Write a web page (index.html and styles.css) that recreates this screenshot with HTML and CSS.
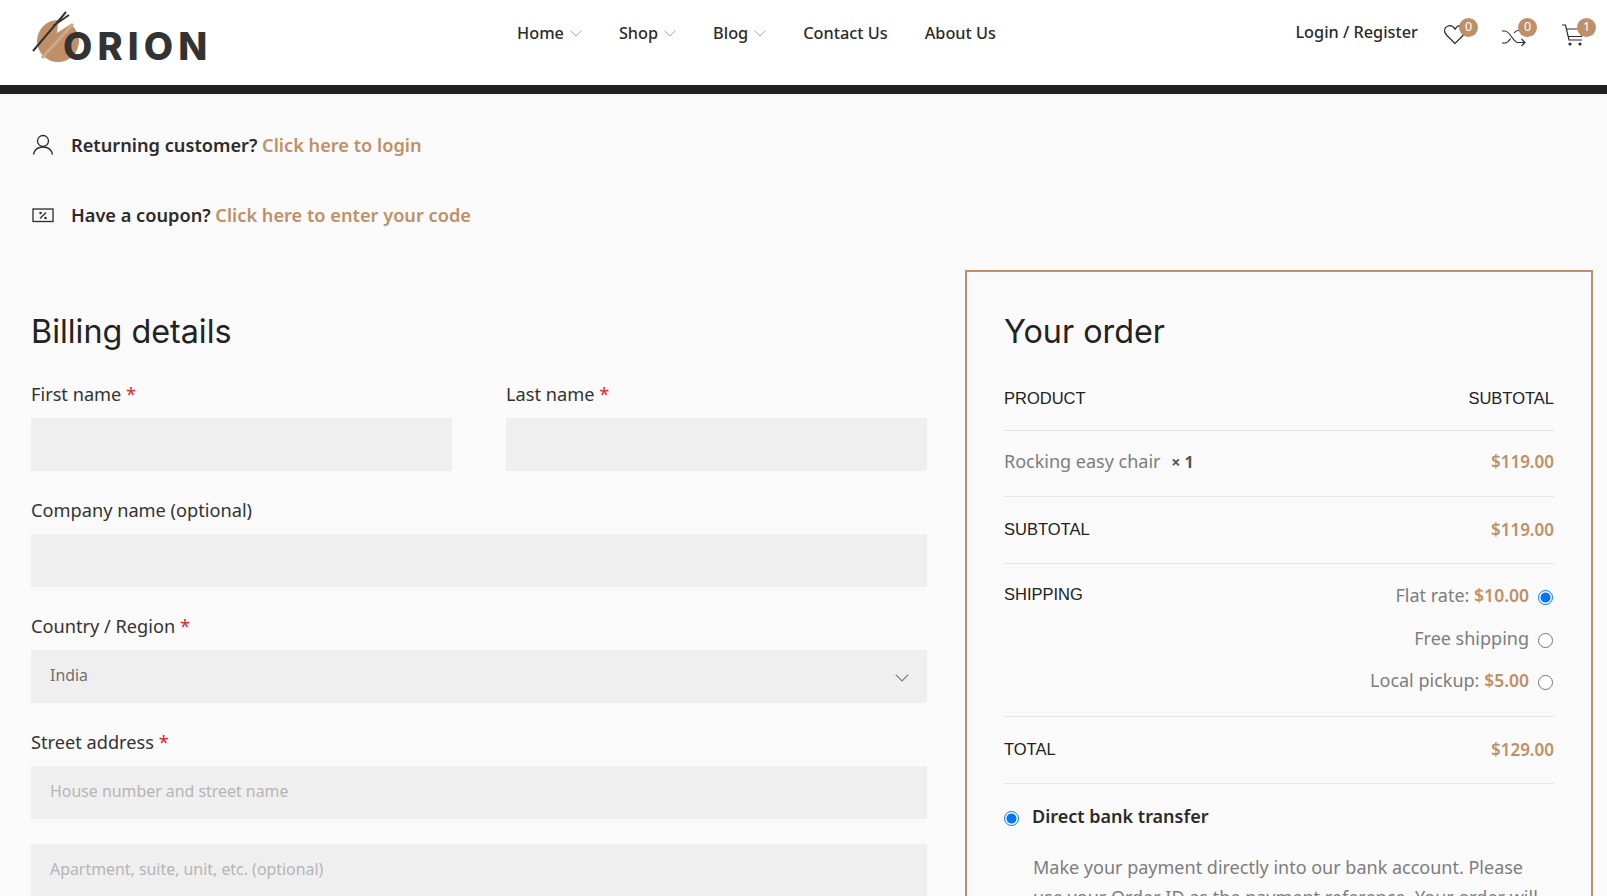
FILE: index.html
```html
<!DOCTYPE html>
<html lang="en">
<head>
<meta charset="utf-8">
<title>Checkout</title>
<link rel="stylesheet" href="styles.css">
</head>
<body>
<header class="site-header">
  <a class="logo">
    <svg class="logo-mark" width="56" height="60" viewBox="32 8 56 60">
      <circle cx="58" cy="41" r="21" fill="#bf9068"/>
      <path d="M57 33 59 15 80 15 74 22Z" fill="#fff"/>
      <path d="M42 58 73 24" stroke="#cfa888" stroke-width="3" fill="none"/>
      <path d="M33 51 66 12M53 26 69 15" stroke="#333" stroke-width="2" fill="none"/>
    </svg>
    <span class="logo-text">ORION</span>
  </a>
  <nav class="main-nav">
    <a class="nav-link">Home<svg class="chev" viewBox="0 0 12 7"><path d="M.5.5 6 6l5.500-5.500"/></svg></a>
    <a class="nav-link">Shop<svg class="chev" viewBox="0 0 12 7"><path d="M.5.5 6 6l5.500-5.500"/></svg></a>
    <a class="nav-link">Blog<svg class="chev" viewBox="0 0 12 7"><path d="M.5.5 6 6l5.500-5.500"/></svg></a>
    <a class="nav-link">Contact Us</a>
    <a class="nav-link">About Us</a>
  </nav>
  <div class="header-tools">
    <a class="login">Login / Register</a>
    <a class="tool">
      <svg width="24" height="24" viewBox="0 0 24 24" class="tool-icon"><path d="M12 21.500 3.500 13C.5 10 1 5.500 4.500 4.200c3-1.100 5.800 0 7.500 3 1.700-3 4.500-4.100 7.500-3C23 5.500 23.500 10 20.500 13Z"/></svg>
      <span class="badge">0</span>
    </a>
    <a class="tool">
      <svg width="24" height="24" viewBox="0 0 24 24" class="tool-icon"><path d="M0 9h3c5 0 8 11.500 13 11.500h7M0 21h3c2.500 0 4-2 5.500-4.500M12 11c1.200-1.500 2.500-2.500 4-2.500h7M19.500 17l3.500 3.500-3.500 3.500"/></svg>
      <span class="badge">0</span>
    </a>
    <a class="tool">
      <svg width="24" height="24" viewBox="0 0 24 24" class="tool-icon"><path d="M1 3h3.500l3.500 15h13M5.500 7H23l-2.500 7.500H7.500"/><circle class="dot" cx="9" cy="22" r="1.600"/><circle class="dot" cx="19" cy="22" r="1.600"/></svg>
      <span class="badge">1</span>
    </a>
  </div>
</header>

<main class="page">
  <div class="notices">
    <p class="notice">
      <svg width="24" height="24" viewBox="0 0 24 24" class="notice-icon"><circle cx="12" cy="8" r="5.500"/><path d="M2.500 21.500C3.500 16.500 7 14 12 14s8.500 2.500 9.500 7.500"/></svg>
      <span>Returning customer? <a class="accent">Click here to login</a></span>
    </p>
    <p class="notice">
      <svg width="24" height="24" viewBox="0 0 24 24" class="notice-icon"><rect x="2" y="6" width="20" height="12.500"/><path d="M9 15.500l6-6"/><circle cx="9.500" cy="10" r=".6"/><circle cx="14.500" cy="15" r=".6"/></svg>
      <span>Have a coupon? <a class="accent">Click here to enter your code</a></span>
    </p>
  </div>

  <div class="checkout">
    <section class="billing">
      <h2 class="section-title">Billing details</h2>
      <div class="field-row">
        <div class="field">
          <label class="field-label">First name <em class="req">*</em></label>
          <div class="input"></div>
        </div>
        <div class="field">
          <label class="field-label">Last name <em class="req">*</em></label>
          <div class="input"></div>
        </div>
      </div>
      <div class="field">
        <label class="field-label">Company name (optional)</label>
        <div class="input"></div>
      </div>
      <div class="field">
        <label class="field-label">Country / Region <em class="req">*</em></label>
        <div class="input select">
          <span>India</span>
          <svg class="select-chev" viewBox="0 0 12 7"><path d="M.5.500 6 6l5.500-5.500"/></svg>
        </div>
      </div>
      <div class="field field-tight">
        <label class="field-label">Street address <em class="req">*</em></label>
        <div class="input placeholder">House number and street name</div>
      </div>
      <div class="field">
        <div class="input placeholder">Apartment, suite, unit, etc. (optional)</div>
      </div>
    </section>

    <aside class="order">
      <h2 class="section-title">Your order</h2>
      <div class="order-row row-head">
        <span class="row-name">PRODUCT</span>
        <span class="row-name">SUBTOTAL</span>
      </div>
      <div class="order-row row-item">
        <span class="muted">Rocking easy chair <strong class="qty">× 1</strong></span>
        <span class="price">$119.00</span>
      </div>
      <div class="order-row row-sub">
        <span class="row-name">SUBTOTAL</span>
        <span class="price">$119.00</span>
      </div>
      <div class="order-row row-ship">
        <span class="row-name ship-name">SHIPPING</span>
        <ul class="ship-list">
          <li class="ship-option"><span class="muted">Flat rate: <b class="price">$10.00</b></span><span class="radio on"></span></li>
          <li class="ship-option"><span class="muted">Free shipping</span><span class="radio"></span></li>
          <li class="ship-option"><span class="muted">Local pickup: <b class="price">$5.00</b></span><span class="radio"></span></li>
        </ul>
      </div>
      <div class="order-row row-total">
        <span class="row-name">TOTAL</span>
        <span class="price">$129.00</span>
      </div>
      <div class="payment">
        <span class="radio on"></span>
        <strong class="pay-name">Direct bank transfer</strong>
      </div>
      <p class="pay-note">Make your payment directly into our bank account. Please use your Order ID as the payment reference. Your order will not be shipped until the funds have cleared.</p>
    </aside>
  </div>
</main>
</body>
</html>
```
FILE: styles.css
```css
* { box-sizing: border-box; }
html, body { margin: 0; height: 896px; overflow: hidden; }
body { background: #fafafa; color: #2b2b2b; font-family: "Noto Sans", "Open Sans", sans-serif; font-size: 18px; }
a { color: inherit; text-decoration: none; }
p, h2, ul { margin: 0; padding: 0; }
em { font-style: normal; }

.site-header { height: 94px; background: #fff; border-bottom: 9px solid #212121; display: flex; padding: 0 12px 0 32px; align-items: flex-start; }
.logo { position: relative; display: block; height: 85px; width: 190px; flex: none; }
.logo-mark { position: absolute; left: 0; top: 8px; }
.logo-text { position: absolute; left: 31px; top: 23px; font-family: "Inter", sans-serif; font-weight: 800; font-size: 38px; line-height: 46px; letter-spacing: 5.100px; color: #333; }
.main-nav { display: flex; gap: 37px; padding-top: 21px; margin-left: 295px; }
.nav-link { display: flex; align-items: center; gap: 6px; font-size: 16.300px; font-weight: 500; line-height: 24px; color: #2b2b2b; }
.chev { width: 12px; height: 7px; fill: none; stroke: #aaa; stroke-width: 1; margin-top: 1px; }
.header-tools { display: flex; align-items: flex-start; padding-top: 20px; margin-left: auto; }
.login { font-size: 16.300px; font-weight: 500; line-height: 24px; margin-right: 25px; }
.tool { position: relative; display: block; width: 59px; height: 30px; padding-top: 2px; }
.tool:last-child { width: 34px; }
.tool-icon { fill: none; stroke: #2b2b2b; stroke-width: 1.200; overflow: visible; }
.tool-icon .dot { fill: #2b2b2b; stroke: none; }
.badge { position: absolute; left: 16px; top: -2px; width: 19px; height: 19px; border-radius: 50%; background: #bf9068; color: #fff; font-size: 12.500px; line-height: 17px; text-align: center; }

.notices { padding: 31px 31px 5px; }
.notice { display: flex; align-items: center; gap: 16px; height: 40px; margin-bottom: 30px; font-size: 18.200px; font-weight: 600; color: #2b2b2b; }
.notice-icon { fill: none; stroke: #2b2b2b; stroke-width: 1.300; flex: none; }
.accent { color: #bf9068; }

.checkout { display: grid; grid-template-columns: 896px 628px; gap: 38px; padding: 0 14px 0 31px; }
.section-title { font-family: "Inter", "Noto Sans", sans-serif; font-weight: 400; font-size: 32.300px; line-height: 40px; color: #222; }
.billing { padding-top: 42px; }
.field-row { display: grid; grid-template-columns: 421px 421px; gap: 54px; }
.field { margin-bottom: 26px; }
.field-tight { margin-bottom: 25px; }
.field-label { display: block; font-size: 18.200px; line-height: 26px; margin-bottom: 11px; color: #333; }
.req { color: #d9262c; }
.billing .section-title { margin-bottom: 29px; }
.input { height: 53px; background: #efefef; padding: 0 19px 4px; display: flex; align-items: center; font-size: 15.900px; color: #6f6f6f; }
.select { justify-content: space-between; }
.select-chev { width: 14px; height: 8px; fill: none; stroke: #777; stroke-width: 1; margin: 7px -1px 0 0; }
.placeholder { color: #b5b5b5; }

.order { border: 2px solid #bf9068; height: 800px; padding: 40px 37px 0; }
.order .section-title { margin-bottom: 19px; }
.order-row { display: flex; justify-content: space-between; align-items: center; border-bottom: 1px solid #e4e4e4; }
.row-head { height: 60px; padding-bottom: 5px; }
.row-item { height: 66px; padding-bottom: 5px; }
.row-sub { height: 67px; padding-bottom: 2px; }
.row-ship { height: 153px; align-items: flex-start; padding-top: 18px; }
.ship-name { margin-top: 3px; }
.row-total { height: 67px; padding-bottom: 2px; }
.row-name { font-family: "Liberation Sans", sans-serif; font-size: 16.500px; color: #222; }
.muted { color: #7d7d7d; font-size: 18px; font-weight: 400; }
.qty { color: #555; font-weight: 700; margin-left: 6px; font-size: 16px; }
.price { color: #bf9068; font-weight: 600; font-size: 17px; }
.ship-list { list-style: none; display: flex; flex-direction: column; gap: 16px; align-items: flex-end; }
.ship-option { display: flex; align-items: center; gap: 9px; line-height: 26.500px; }
.ship-option .price { font-size: 17.500px; }
.radio { display: block; flex: none; width: 15px; height: 15px; border-radius: 50%; border: 1.500px solid #767676; margin: 5px 1px 0 0; background: #fff; }
.radio.on { border-color: #0075ff; background: radial-gradient(circle, #0075ff 0 4.600px, #fff 5.400px); }
.payment { display: flex; align-items: center; gap: 12px; padding-top: 20px; }
.pay-name { font-weight: 600; font-size: 18px; color: #2b2b2b; }
.pay-note { margin: 24px 0 0 29px; color: #7d7d7d; font-size: 18px; line-height: 30px; }
```
